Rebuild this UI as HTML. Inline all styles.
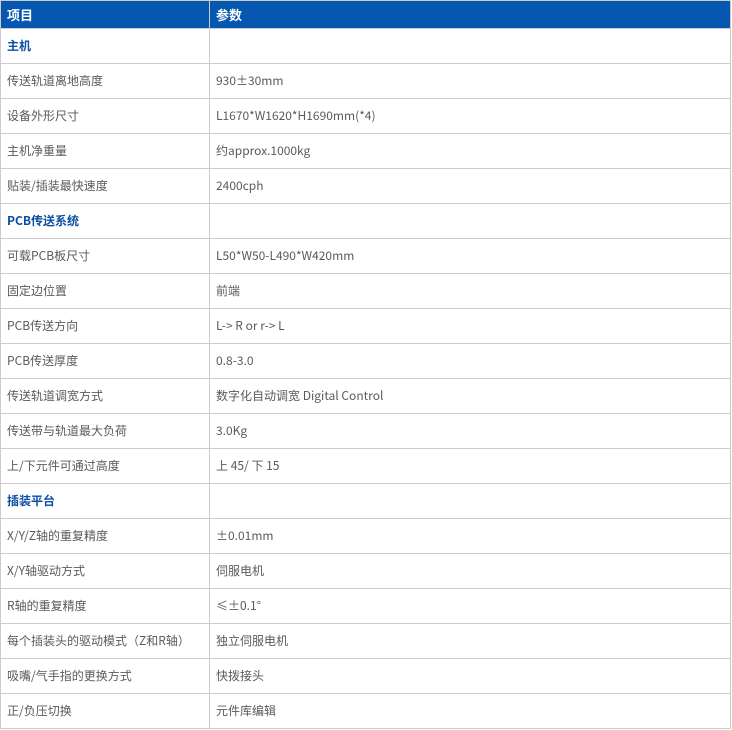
<!DOCTYPE html><html><head><meta charset="utf-8"><style>
body{margin:0;background:#fff;font-family:"Noto Sans CJK SC",sans-serif;}
table{border-collapse:collapse;width:731px;table-layout:fixed;font-size:12px;color:#5a5a5a;}
td,th{border:1px solid #ccc;padding:0 0 0 6px;text-align:left;height:34px;line-height:16px;}
th{background:#0557b0;color:#fff;font-weight:bold;font-size:13px;height:27px;border-color:#ccc;}
td.s{color:#0b4ea2;font-weight:bold;}
</style></head><body><table>
<col style="width:209px"><col>
<tr><th>项目</th><th>参数</th></tr>
<tr><td class="s">主机</td><td></td></tr>
<tr><td>传送轨道离地高度</td><td>930±30mm</td></tr>
<tr><td>设备外形尺寸</td><td>L1670*W1620*H1690mm(*4)</td></tr>
<tr><td>主机净重量</td><td>约approx.1000kg</td></tr>
<tr><td>贴装/插装最快速度</td><td>2400cph</td></tr>
<tr><td class="s">PCB传送系统</td><td></td></tr>
<tr><td>可载PCB板尺寸</td><td>L50*W50-L490*W420mm</td></tr>
<tr><td>固定边位置</td><td>前端</td></tr>
<tr><td>PCB传送方向</td><td>L-&gt; R or r-&gt; L</td></tr>
<tr><td>PCB传送厚度</td><td>0.8-3.0</td></tr>
<tr><td>传送轨道调宽方式</td><td>数字化自动调宽 Digital Control</td></tr>
<tr><td>传送带与轨道最大负荷</td><td>3.0Kg</td></tr>
<tr><td>上/下元件可通过高度</td><td>上 45/ 下 15</td></tr>
<tr><td class="s">插装平台</td><td></td></tr>
<tr><td>X/Y/Z轴的重复精度</td><td>±0.01mm</td></tr>
<tr><td>X/Y轴驱动方式</td><td>伺服电机</td></tr>
<tr><td>R轴的重复精度</td><td>≤±0.1°</td></tr>
<tr><td>每个插装头的驱动模式（Z和R轴）</td><td>独立伺服电机</td></tr>
<tr><td>吸嘴/气手指的更换方式</td><td>快拨接头</td></tr>
<tr><td>正/负压切换</td><td>元件库编辑</td></tr>
</table></body></html>
